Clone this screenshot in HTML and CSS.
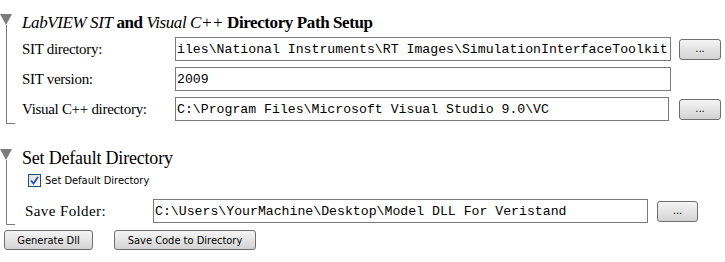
FILE: index.html
```html
<!DOCTYPE html>
<html lang="en">
<head>
    <meta charset="UTF-8">
    <title>Model DLL Builder</title>
    <link rel="stylesheet" href="styles.css">
</head>
<body>
    <div class="panel">
        <section class="group group-paths">
            <div class="rail"><span class="arrow"></span><span class="line"></span></div>
            <div class="group-body">
                <h2 class="group-title paths-title"><i>LabVIEW SIT</i> <b>and</b> <i>Visual C++</i> <b>Directory Path Setup</b></h2>
                <div class="fields">
                    <label class="field-label">SIT directory:</label>
                    <input class="path-box" type="text" value="iles\National Instruments\RT Images\SimulationInterfaceToolkit">
                    <button class="browse-btn">...</button>

                    <label class="field-label">SIT version:</label>
                    <input class="path-box" type="text" value="2009">
                    <span></span>

                    <label class="field-label">Visual C++ directory:</label>
                    <input class="path-box short" type="text" value="C:\Program Files\Microsoft Visual Studio 9.0\VC">
                    <button class="browse-btn">...</button>
                </div>
            </div>
        </section>

        <section class="group group-default">
            <div class="rail"><span class="arrow"></span><span class="line"></span></div>
            <div class="group-body">
                <h2 class="group-title">Set Default Directory</h2>
                <label class="check">
                    <span class="check-box">
                        <svg width="9" height="9" viewBox="0 0 9 9"><path d="M1 4.5 L3.5 7.5 L8 1" fill="none" stroke="#2a52be" stroke-width="1.8"/></svg>
                    </span>
                    Set Default Directory
                </label>
                <div class="save-row">
                    <label class="save-label">Save Folder:</label>
                    <input class="path-box save-box" type="text" value="C:\Users\YourMachine\Desktop\Model DLL For Veristand">
                    <button class="browse-btn">...</button>
                </div>
            </div>
        </section>

        <div class="actions">
            <button class="action-btn gen">Generate Dll</button>
            <button class="action-btn save">Save Code to Directory</button>
        </div>
    </div>
</body>
</html>
```

FILE: styles.css
```css
:root {
    --rail-gray: #7c7c7c;
    --box-border: #7a7a7a;
    --btn-border: #6f6f6f;
}
* {
    margin: 0;
    padding: 0;
    box-sizing: border-box;
}
body {
    background: #ffffff;
    color: #000000;
    font-family: "Liberation Serif", "Times New Roman", serif;
}
.panel {
    padding-top: 14px;
}
.group {
    display: flex;
}
.group-default {
    margin-top: 25px;
}
.rail {
    width: 22px;
    flex-shrink: 0;
    display: flex;
    flex-direction: column;
}
.arrow {
    width: 0;
    height: 0;
    border-left: 6px solid transparent;
    border-right: 6px solid transparent;
    border-top: 11px solid var(--rail-gray);
}
.line {
    flex: 1;
    width: 9px;
    margin-left: 6px;
    border-left: 1px solid var(--rail-gray);
    border-bottom: 1px solid var(--rail-gray);
}
.group-body {
    flex: 1;
}
.group-title {
    font-family: "Liberation Serif", "Times New Roman", serif;
    font-size: 18px;
    font-weight: normal;
    line-height: 18px;
    letter-spacing: -0.2px;
    height: 23px;
}
.paths-title {
    font-size: 17px;
    letter-spacing: -0.4px;
}
.fields {
    display: grid;
    grid-template-columns: 145px 496px 42px;
    grid-auto-rows: 24px;
    column-gap: 8px;
    row-gap: 6px;
    align-items: center;
    padding-bottom: 3px;
}
.field-label {
    font-size: 15px;
    letter-spacing: -0.3px;
}
.path-box {
    height: 24px;
    width: 100%;
    border: 1px solid var(--box-border);
    padding: 0 1px;
    font-family: "Liberation Mono", "Courier New", monospace;
    font-size: 13.2px;
    color: #000;
    background: #fff;
    outline: none;
}
.path-box.short {
    width: 494px;
}
.browse-btn {
    height: 21px;
    width: 42px;
    border: 1px solid var(--btn-border);
    border-radius: 3px;
    background: linear-gradient(#f4f4f4, #e4e4e4 50%, #d3d3d3);
    font-family: Tahoma, "DejaVu Sans", sans-serif;
    font-size: 10px;
    line-height: 14px;
    color: #000;
}
.check {
    display: flex;
    align-items: center;
    gap: 4px;
    margin: 1px 0 0 6px;
    height: 14px;
    font-family: "DejaVu Sans Condensed", "DejaVu Sans", sans-serif;
    font-size: 11px;
}
.check-box {
    width: 13px;
    height: 13px;
    border: 1px solid #1c5180;
    background: linear-gradient(135deg, #dcdcd7, #ffffff);
    display: flex;
    align-items: center;
    justify-content: center;
}
.save-row {
    display: flex;
    align-items: center;
    margin-top: 12px;
    padding-bottom: 2px;
}
.save-label {
    width: 131px;
    padding-left: 3px;
    font-size: 15px;
    letter-spacing: 0.4px;
}
.save-box {
    width: 495px;
}
.save-row .browse-btn {
    margin-left: 9px;
    width: 41px;
}
.actions {
    display: flex;
    gap: 21px;
    padding: 5px 0 0 4px;
}
.action-btn {
    height: 20px;
    border: 1px solid var(--btn-border);
    border-radius: 3px;
    background: linear-gradient(#f4f4f4, #e4e4e4 50%, #d3d3d3);
    font-family: "DejaVu Sans Condensed", "DejaVu Sans", sans-serif;
    font-size: 11px;
    color: #000;
}
.action-btn.gen {
    width: 89px;
}
.action-btn.save {
    width: 142px;
}
```
